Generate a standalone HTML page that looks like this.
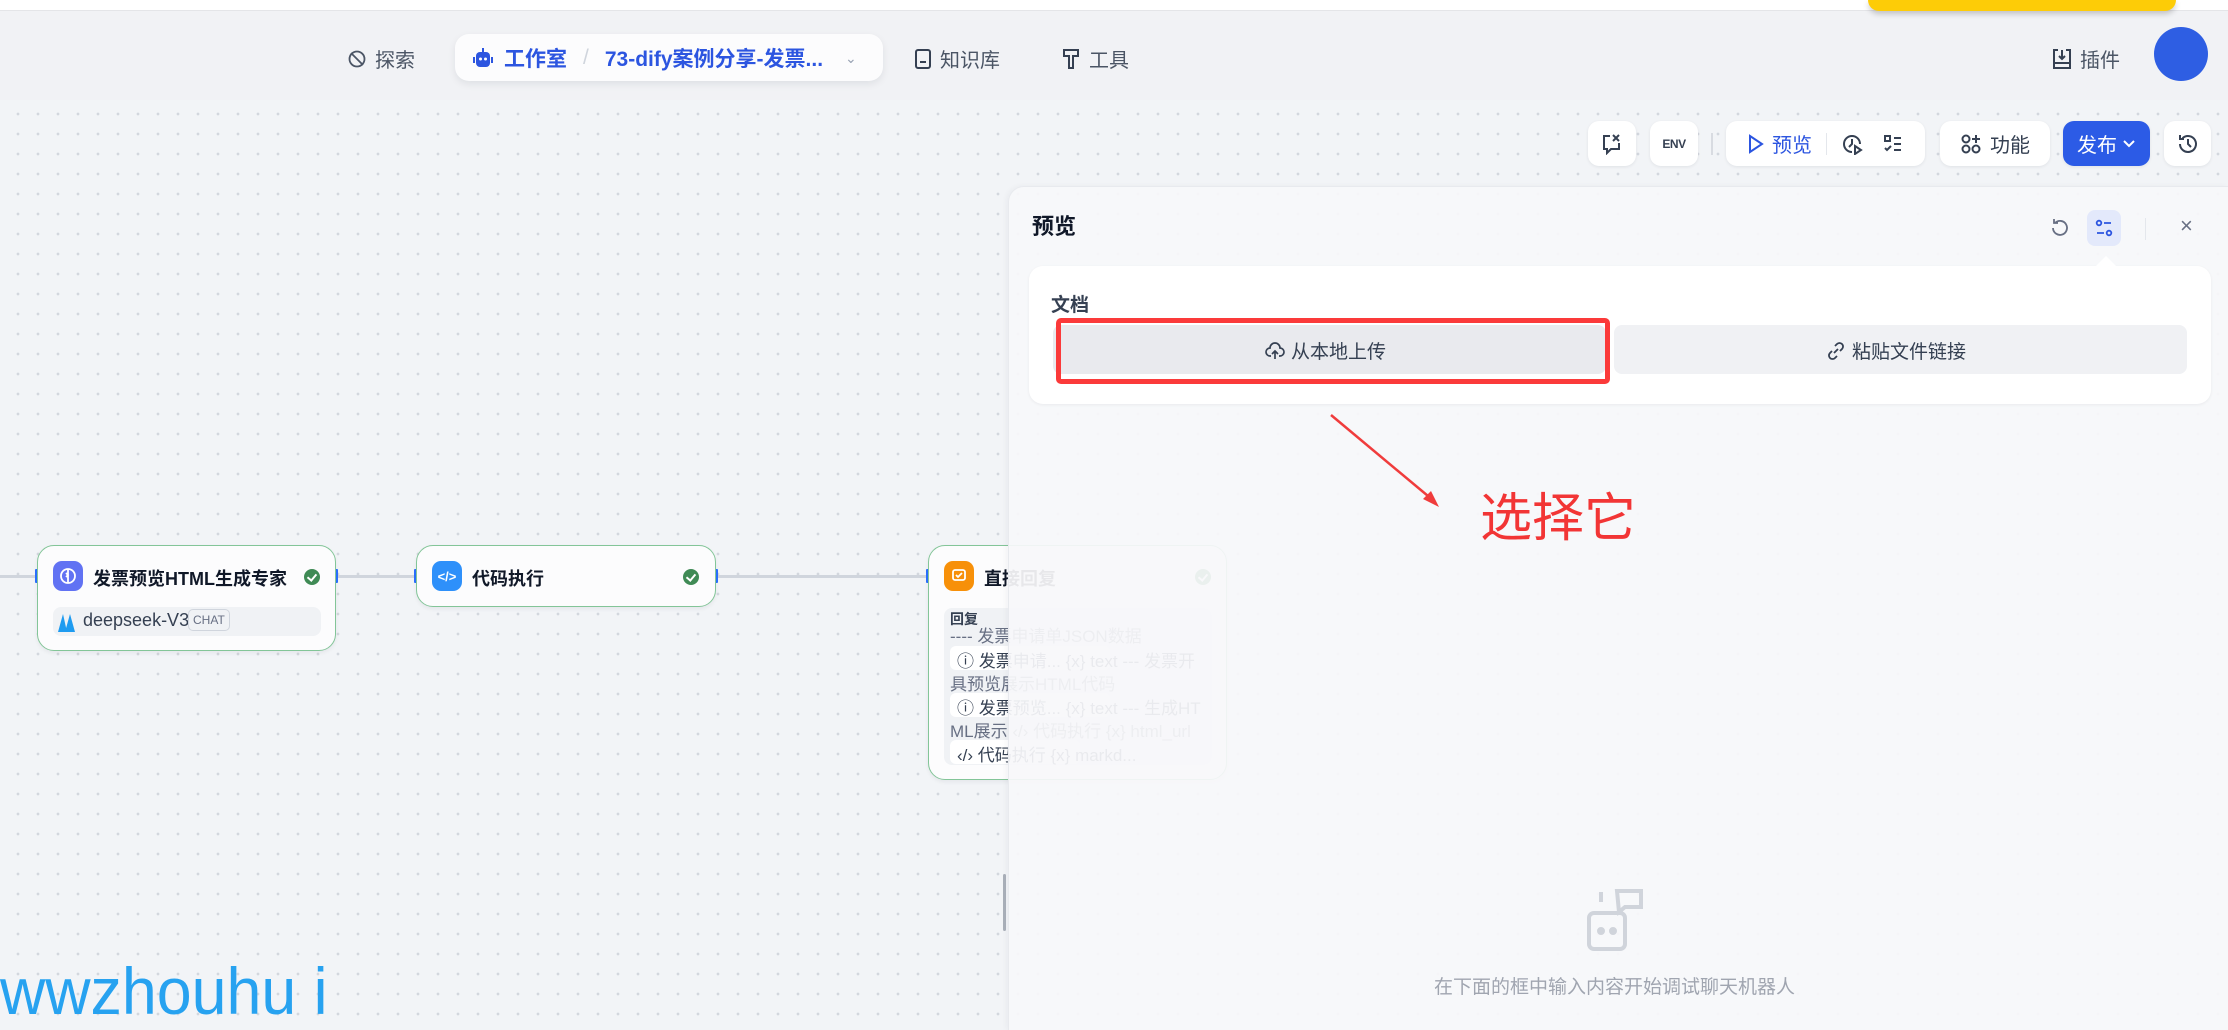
<!DOCTYPE html>
<html><head><meta charset="utf-8"><style>
*{box-sizing:border-box;margin:0;padding:0}
body{width:2228px;height:1030px;overflow:hidden;position:relative;background:#f2f4f7;font-family:"Liberation Sans","Noto Sans CJK SC",sans-serif;color:#101828}
.abs{position:absolute}
.grid{position:absolute;left:0;top:100px;width:2228px;height:930px;background-image:radial-gradient(circle,#d3d7de 1.2px,transparent 1.6px);background-size:20px 20px;background-position:8px 4px}
.hdr{position:absolute;left:0;top:11px;width:2228px;height:89px;background:#f1f2f5}
.nav{position:absolute;font-size:20px;color:#4b5565;display:flex;align-items:center;gap:8px}
.btn{position:absolute;top:121px;height:45px;background:#fff;border-radius:11px;box-shadow:0 1px 3px rgba(16,24,40,.08);display:flex;align-items:center;justify-content:center;font-size:20px;color:#354052}
.node{position:absolute;background:#fcfcfd;border:1.5px solid #83c598;border-radius:17px;box-shadow:0 2px 4px rgba(16,24,40,.06)}
.ic{position:absolute;width:30px;height:30px;border-radius:9px;display:flex;align-items:center;justify-content:center}
.chk{position:absolute;width:16px;height:16px;border-radius:50%;background:#3f8a55}
.chk::after{content:"";position:absolute;left:5px;top:3px;width:4px;height:7px;border:solid #fff;border-width:0 2px 2px 0;transform:rotate(40deg)}
.line{position:absolute;height:3px;background:#d0d5dd;top:575px}
.port{position:absolute;width:4px;height:14px;background:#2970ff;top:569px;border-radius:1px}
.t{position:absolute;font-size:17px;color:#676f83;white-space:nowrap}
.chip{position:absolute;background:#fff;border-radius:6px;height:24px}
</style></head><body>
<div class="abs" style="left:0;top:0;width:2228px;height:10px;background:#fff"></div>
<div class="abs" style="left:0;top:10px;width:2228px;height:2px;background:#e4e5e8"></div>
<div class="hdr"></div>
<div class="abs" style="left:1868px;top:0;width:308px;height:11px;background:#fdcc07;border-radius:0 0 14px 14px;box-shadow:0 3px 6px rgba(0,0,0,.2)"></div>
<div class="grid"></div>

<!-- nav -->
<div class="nav" style="left:347px;top:44px"><svg width="20" height="20" viewBox="0 0 20 20" fill="none" stroke="#4b5565" stroke-width="1.8"><circle cx="10" cy="10" r="7.5"/><path d="M4 4l12 12"/></svg>探索</div>
<div class="abs" style="left:455px;top:34px;width:428px;height:47px;background:#fcfcfd;border-radius:14px;box-shadow:0 3px 8px rgba(16,24,40,.08)"></div>
<div class="nav" style="left:472px;top:43px;color:#2c55e0;font-weight:bold;gap:10px;font-size:21px"><svg width="22" height="22" viewBox="0 0 22 22"><rect x="10" y="1" width="2" height="5" fill="#2c55e0"/><rect x="4" y="5" width="14" height="15" rx="4" fill="#2c55e0"/><rect x="1" y="10" width="2" height="6" fill="#2c55e0"/><rect x="19" y="10" width="2" height="6" fill="#2c55e0"/><circle cx="8.5" cy="12" r="1.5" fill="#fff"/><circle cx="13.5" cy="12" r="1.5" fill="#fff"/></svg>工作室<span style="color:#d0d5dd;font-weight:normal;margin:0 6px">/</span>73-dify案例分享-发票...<span style="color:#98a2b3;font-weight:normal;font-size:14px;margin-left:12px">&#8964;</span></div>
<div class="nav" style="left:914px;top:44px"><svg width="18" height="22" viewBox="0 0 18 22" fill="none" stroke="#354052" stroke-width="2"><rect x="2" y="2" width="14" height="18" rx="2"/><path d="M6 14h6"/></svg>知识库</div>
<div class="nav" style="left:1061px;top:44px"><svg width="20" height="22" viewBox="0 0 20 22" fill="none" stroke="#354052" stroke-width="2"><path d="M3 2h14v6h-5v12h-4V8H3z"/></svg>工具</div>
<div class="nav" style="left:2052px;top:44px"><svg width="20" height="22" viewBox="0 0 20 22" fill="none" stroke="#354052" stroke-width="2"><path d="M6 2H2v18h16V2h-4M10 2v9M7 8l3 3 3-3M2 15h16"/></svg>插件</div>
<div class="abs" style="left:2154px;top:27px;width:54px;height:54px;border-radius:50%;background:#2e5ee3"></div>

<!-- toolbar -->
<div class="btn" style="left:1588px;width:48px"><svg width="22" height="22" viewBox="0 0 22 22" fill="none" stroke="#354052" stroke-width="2"><path d="M9 3H3v13h3v4l4-4h8v-6M12 2l6 6M18 2l-6 6"/></svg></div>
<div class="btn" style="left:1650px;width:48px;font-size:12px;font-weight:bold;letter-spacing:-.5px">ENV</div>
<div class="abs" style="left:1711px;top:133px;width:2px;height:22px;background:#d8dbe1"></div>
<div class="btn" style="left:1726px;width:199px;justify-content:flex-start;padding-left:22px;color:#2c55e0"><svg width="16" height="20" viewBox="0 0 16 20" fill="none" stroke="#2c55e0" stroke-width="2"><path d="M2 2l12 8-12 8z"/></svg><span style="margin-left:8px">预览</span><span style="width:1px;height:22px;background:#e4e7ec;margin:0 14px"></span><svg width="22" height="22" viewBox="0 0 22 22" fill="none" stroke="#354052" stroke-width="2"><path d="M19 11a8 8 0 1 0-8 8"/><path d="M11 6v5l-3 3M14 13l6 4-6 4z"/></svg><svg style="margin-left:20px" width="20" height="20" viewBox="0 0 20 20" fill="none" stroke="#354052" stroke-width="2"><rect x="2" y="2" width="5" height="5"/><path d="M11 4h7M11 10h7M11 16h7M2 14l2 2 4-4"/></svg></div>
<div class="btn" style="left:1940px;width:110px"><svg width="22" height="22" viewBox="0 0 22 22" fill="none" stroke="#354052" stroke-width="2"><circle cx="6" cy="6" r="3.5"/><circle cx="6" cy="16" r="3.5"/><circle cx="16" cy="16" r="3.5"/><path d="M16 2v8M12 6h8"/></svg><span style="margin-left:8px">功能</span></div>
<div class="btn" style="left:2063px;width:87px;background:#2c5be6;color:#fff">发布<svg style="margin-left:5px" width="14" height="10" viewBox="0 0 14 10" fill="none" stroke="#fff" stroke-width="2"><path d="M2 2l5 5 5-5"/></svg></div>
<div class="btn" style="left:2164px;width:47px"><svg width="22" height="22" viewBox="0 0 22 22" fill="none" stroke="#354052" stroke-width="2"><path d="M3 11a8 8 0 1 0 2.5-5.8M3 2v4h4M11 6v5l3 3"/></svg></div>

<!-- lines -->
<div class="line" style="left:0;width:37px"></div>
<div class="line" style="left:336px;width:80px"></div>
<div class="line" style="left:716px;width:212px"></div>
<div class="port" style="left:35px"></div><div class="port" style="left:334px"></div><div class="port" style="left:414px"></div><div class="port" style="left:714px"></div><div class="port" style="left:926px"></div>

<!-- node1 -->
<div class="node" style="left:37px;top:545px;width:299px;height:106px">
 <div class="ic" style="left:15px;top:15px;background:#6172f3"><svg width="18" height="18" viewBox="0 0 18 18" fill="none" stroke="#fff" stroke-width="1.8"><circle cx="9" cy="9" r="7"/><path d="M9 2v14M7 6l2 2-2 2"/></svg></div>
 <div class="abs" style="left:55px;top:19px;font-size:18px;font-weight:bold;white-space:nowrap">发票预览HTML生成专家</div>
 <div class="chk" style="left:266px;top:23px"></div>
 <div class="abs" style="left:15px;top:61px;width:268px;height:29px;background:#f0f2f5;border-radius:8px"></div>
 <svg class="abs" style="left:18px;top:64px" width="22" height="24" viewBox="0 0 22 24"><path d="M2 22L7 4l4 18zM9 22l5-18 5 18z" fill="#1e9bf0"/></svg>
 <div class="abs" style="left:45px;top:64px;font-size:18px;color:#354052">deepseek-V3</div>
 <div class="abs" style="left:150px;top:63px;border:1px solid #d0d5dd;border-radius:5px;font-size:12px;color:#676f83;padding:3px 4px">CHAT</div>
</div>
<!-- node2 -->
<div class="node" style="left:416px;top:545px;width:300px;height:62px">
 <div class="ic" style="left:15px;top:15px;background:#2e90fa;color:#fff;font-size:13px;font-weight:bold">&lt;/&gt;</div>
 <div class="abs" style="left:55px;top:19px;font-size:18px;font-weight:bold">代码执行</div>
 <div class="chk" style="left:266px;top:23px"></div>
</div>
<!-- node3 -->
<div class="node" style="left:928px;top:545px;width:299px;height:235px">
 <div class="ic" style="left:15px;top:15px;background:#f79009"><svg width="16" height="16" viewBox="0 0 16 16" fill="none" stroke="#fff" stroke-width="1.8"><rect x="2" y="2" width="12" height="10" rx="2"/><path d="M5 7l2 2 4-4"/></svg></div>
 <div class="abs" style="left:55px;top:19px;font-size:18px;font-weight:bold">直接回复</div>
 <div class="chk" style="left:266px;top:23px"></div>
 <div class="abs" style="left:15px;top:62px;width:268px;height:157px;background:#f0f2f5;border-radius:8px"></div>
 <div class="abs" style="left:21px;top:63px;font-size:14px;font-weight:bold;color:#354052">回复</div>
 <div class="t" style="left:21px;top:76px">---- 发票申请单JSON数据</div>
 <div class="chip" style="left:21px;top:100px;width:160px"></div><div class="t" style="left:28px;top:101px;color:#354052">ⓘ 发票申请...  {x} text  --- 发票开</div>
 <div class="t" style="left:21px;top:124px">具预览展示HTML代码</div>
 <div class="chip" style="left:21px;top:147px;width:160px"></div><div class="t" style="left:28px;top:148px;color:#354052">ⓘ 发票预览...  {x} text  --- 生成HT</div>
 <div class="t" style="left:21px;top:171px">ML展示  ‹/› 代码执行  {x} html_url</div>
 <div class="chip" style="left:21px;top:194px;width:130px"></div><div class="t" style="left:28px;top:195px;color:#354052">‹/› 代码执行  {x} markd...</div>
</div>

<!-- scrollbar -->
<div class="abs" style="left:1003px;top:874px;width:3px;height:57px;background:#aab0ba;border-radius:2px"></div>

<!-- panel -->
<div class="abs" style="left:1008px;top:186px;width:1220px;height:844px;background:rgba(247,248,250,.93);border-left:1px solid #e8eaee;border-top:1px solid #e8eaee;border-top-left-radius:16px;box-shadow:-2px 0 6px rgba(16,24,40,.04)"></div>
<div class="abs" style="left:1032px;top:209px;font-size:22px;font-weight:bold">预览</div>
<svg class="abs" style="left:2049px;top:217px" width="22" height="22" viewBox="0 0 22 22" fill="none" stroke="#676f83" stroke-width="1.8"><path d="M4 11a7 7 0 1 0 2-5M5 2v4h4"/></svg>
<div class="abs" style="left:2087px;top:210px;width:34px;height:36px;background:#e3e9fb;border-radius:8px"></div>
<svg class="abs" style="left:2094px;top:218px" width="20" height="20" viewBox="0 0 20 20" fill="none" stroke="#2c55e0" stroke-width="1.8"><circle cx="5" cy="5" r="2.3"/><path d="M10 5h7M3 15h7"/><circle cx="15" cy="15" r="2.3"/></svg>
<div class="abs" style="left:2145px;top:218px;width:1px;height:22px;background:#e4e7ec"></div>
<div class="abs" style="left:2180px;top:213px;font-size:22px;color:#676f83">×</div>
<div class="abs" style="left:1029px;top:266px;width:1182px;height:138px;background:#fff;border-radius:14px;box-shadow:0 1px 3px rgba(16,24,40,.06)"></div>
<div class="abs" style="left:2096px;top:256px;width:0;height:0;border-left:10px solid transparent;border-right:10px solid transparent;border-bottom:10px solid #fff"></div>
<div class="abs" style="left:1051px;top:290px;font-size:19px;font-weight:bold;color:#354052">文档</div>
<div class="abs" style="left:1053px;top:325px;width:553px;height:49px;background:#e9eaee;border-radius:8px"></div>
<div class="abs" style="left:1614px;top:325px;width:573px;height:49px;background:#f0f1f4;border-radius:8px"></div>
<div class="abs" style="left:1056px;top:318px;width:554px;height:66px;border:5px solid #fb3a3a;border-radius:5px"></div>
<div class="abs" style="left:1265px;top:337px;font-size:19px;color:#354052;display:flex;align-items:center;gap:6px"><svg width="20" height="20" viewBox="0 0 20 20" fill="none" stroke="#354052" stroke-width="1.7"><path d="M6 15H5a4 4 0 0 1 0-8 5 5 0 0 1 10 0 4 4 0 0 1 0 8h-1M10 18V10M7 13l3-3 3 3"/></svg>从本地上传</div>
<div class="abs" style="left:1826px;top:337px;font-size:19px;color:#354052;display:flex;align-items:center;gap:6px"><svg width="20" height="20" viewBox="0 0 20 20" fill="none" stroke="#354052" stroke-width="1.8"><path d="M8 12l4-4M9 5l2-2a3.5 3.5 0 0 1 5 5l-2 2M11 15l-2 2a3.5 3.5 0 0 1-5-5l2-2"/></svg>粘贴文件链接</div>
<svg class="abs" style="left:1320px;top:405px" width="130" height="110" viewBox="0 0 130 110"><path d="M11 10L114 96" stroke="#f03c3c" stroke-width="2.5"/><path d="M119 102L103 94l8-8z" fill="#f03c3c"/></svg>
<div class="abs" style="left:1480px;top:476px;font-size:52px;color:#f23535">选择它</div>
<svg class="abs" style="left:1587px;top:887px" width="60" height="68" viewBox="0 0 60 68" fill="none" stroke="#d0d4db" stroke-width="4"><rect x="2" y="26" width="36" height="36" rx="5"/><circle cx="14" cy="44" r="2" fill="#d0d4db"/><circle cx="26" cy="44" r="2" fill="#d0d4db"/><path d="M14 5v10M30 4h24v16H38l-6 5z"/></svg>
<div class="abs" style="left:1434px;top:972px;font-size:19px;color:#a0a5b0;white-space:nowrap">在下面的框中输入内容开始调试聊天机器人</div>

<div class="abs" style="left:0;top:953px;font-size:66px;color:#27a2f0;white-space:nowrap;transform:scaleX(.95);transform-origin:left">wwzhouhu i</div>
</body></html>
